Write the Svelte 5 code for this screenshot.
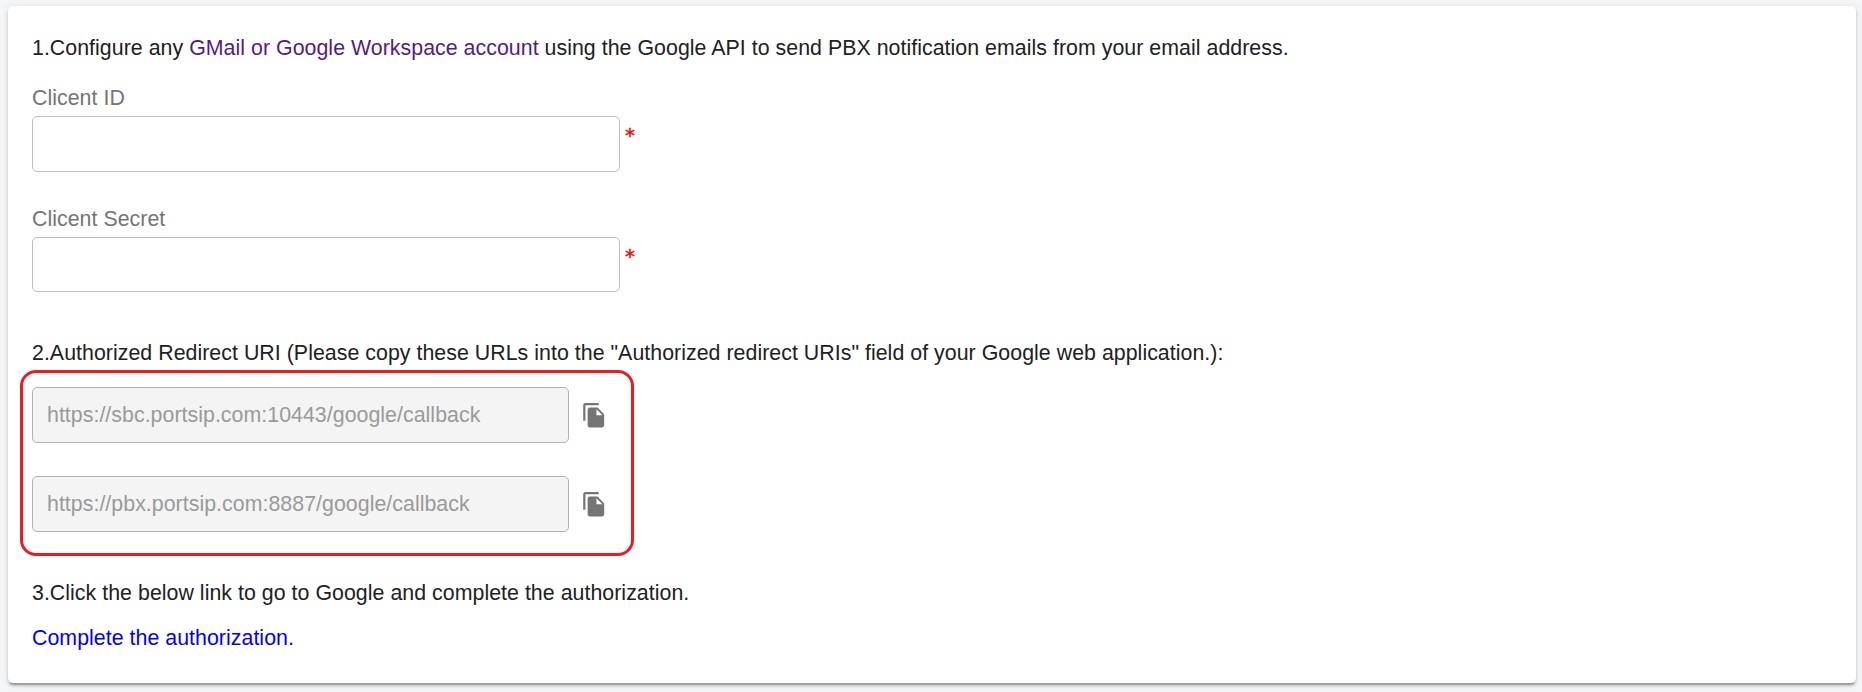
<script>
  const fields = [
    { id: 'client-id', label: 'Clicent ID' },
    { id: 'client-secret', label: 'Clicent Secret' }
  ];
  const urls = [
    'https://sbc.portsip.com:10443/google/callback',
    'https://pbx.portsip.com:8887/google/callback'
  ];
</script>

<div class="page">
  <main class="card">
    <p class="step">1.Configure any <a class="visited" href="#account">GMail or Google Workspace account</a> using the Google API to send PBX notification emails from your email address.</p>

    {#each fields as field}
      <div class="field {field.id}">
        <label for={field.id}>{field.label}</label>
        <div class="row">
          <input id={field.id} type="text" />
          <span class="required">*</span>
        </div>
      </div>
    {/each}

    <p class="step second">2.Authorized Redirect URI (Please copy these URLs into the "Authorized redirect URIs" field of your Google web application.):</p>

    <div class="urls">
      {#each urls as url}
        <div class="url-row">
          <div class="url">{url}</div>
          <button aria-label="Copy">
            <svg viewBox="0 0 24 24" width="26.5" height="26.5"><path fill="#757575" d="M16 1H4c-1.1 0-2 .9-2 2v14h2V3h12V1zm-1 4l6 6v10c0 1.1-.9 2-1.99 2H7.99C6.89 23 6 22.1 6 21V7c0-1.1.89-2 1.99-2H15zm-1 7h5.5L14 6.5V12z" /></svg>
          </button>
        </div>
      {/each}
    </div>

    <p class="step third">3.Click the below link to go to Google and complete the authorization.</p>
    <a class="authorize" href="#authorize">Complete the authorization.</a>
  </main>
</div>

<style>
  .page {
    box-sizing: border-box;
    height: 692px;
    padding: 6px 6px 9px 8px;
    background: #f5f6f8;
  }
  .card {
    box-sizing: border-box;
    height: 677px;
    padding: 30px 24px 0;
    background: #fff;
    border-radius: 5px;
    box-shadow: 0 4px 1.33px -2.67px rgba(0, 0, 0, 0.2), 0 2.67px 2.67px rgba(0, 0, 0, 0.14), 0 1.33px 6.67px rgba(0, 0, 0, 0.12);
    font: 21.33px/24px "Liberation Sans", Arial, sans-serif;
    letter-spacing: 0.04px;
    color: #212121;
  }
  .step {
    margin: 0;
    white-space: nowrap;
  }
  a {
    text-decoration: none;
  }
  .visited {
    color: #551a8b;
  }
  .field {
    display: flex;
    flex-direction: column;
    gap: 6px;
    margin-top: 26px;
  }
  .client-secret {
    margin-top: 35px;
  }
  label {
    color: #757575;
  }
  .row {
    display: flex;
    gap: 5px;
  }
  input {
    box-sizing: border-box;
    width: 588px;
    height: 56px;
    border: 1px solid #bfbfbf;
    border-radius: 5px;
    background: #fff;
    padding: 0 15px;
    outline: none;
  }
  .client-secret input {
    height: 55px;
  }
  .required {
    color: #f00;
    padding-top: 7px;
    font-family: "DejaVu Sans", sans-serif;
    font-size: 20px;
    letter-spacing: 0;
    -webkit-text-stroke: 0.4px #f00;
  }
  .second {
    margin-top: 49px;
  }
  .urls {
    box-sizing: border-box;
    width: 614px;
    height: 186px;
    margin: 5px 0 0 -12px;
    padding: 14px 9px;
    border: 3px solid #ed1c24;
    border-radius: 16px;
    display: flex;
    flex-direction: column;
    gap: 33px;
  }
  .url-row {
    display: flex;
    align-items: center;
    gap: 12px;
  }
  .url {
    box-sizing: border-box;
    width: 537px;
    height: 56px;
    padding: 0 14px;
    border: 1px solid #b3b3b3;
    border-radius: 5px;
    background: #f4f4f4;
    color: #9a9a9a;
    line-height: 54px;
  }
  button {
    display: flex;
    padding: 0;
    border: 0;
    background: none;
  }
  .third {
    margin-top: 25px;
  }
  .authorize {
    display: block;
    margin-top: 21px;
    color: #00f;
  }
</style>
